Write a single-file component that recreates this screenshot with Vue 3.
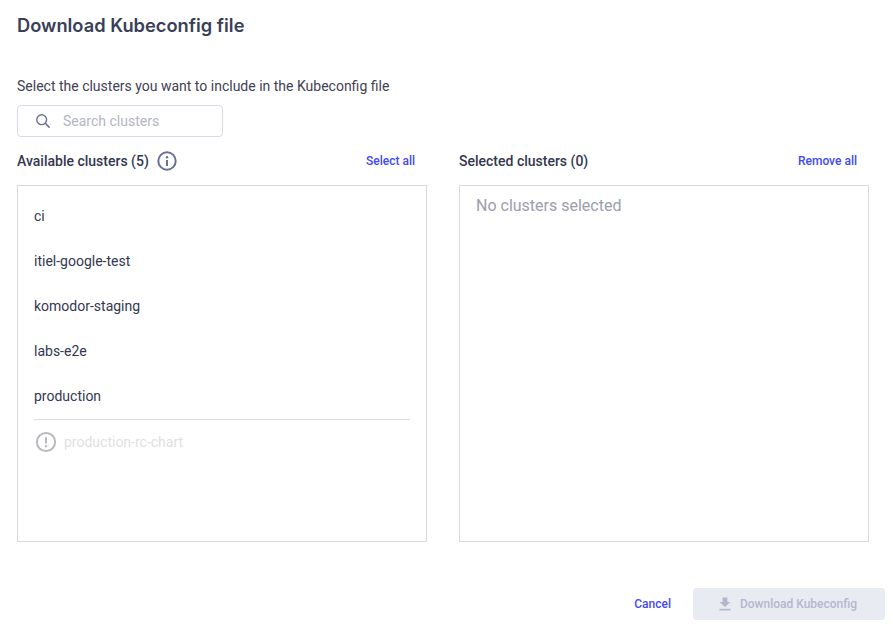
<script setup>
const clusters = ['ci', 'itiel-google-test', 'komodor-staging', 'labs-e2e', 'production']
</script>

<template>
  <div class="modal">
    <h1 class="title">Download Kubeconfig file</h1>
    <p class="intro">Select the clusters you want to include in the Kubeconfig file</p>
    <div class="search">
      <svg class="search-icon" width="16" height="16" viewBox="0 0 16 16" fill="none">
        <circle cx="6.7" cy="6.7" r="4.9" stroke="#6b7096" stroke-width="1.4" />
        <path d="M10.3 10.3 14.6 14.6" stroke="#6b7096" stroke-width="1.5" />
      </svg>
      <span class="placeholder">Search clusters</span>
    </div>
    <div class="columns">
      <section class="column">
        <header class="col-head">
          <div class="col-title">
            <span>Available clusters (5)</span>
            <svg width="20" height="20" viewBox="0 0 20 20" fill="none">
              <circle cx="10" cy="10" r="8.7" stroke="#6b7096" stroke-width="2" />
              <circle cx="10" cy="6.2" r="1.2" fill="#6b7096" />
              <path d="M10 9v6" stroke="#6b7096" stroke-width="2" />
            </svg>
          </div>
          <a class="link">Select all</a>
        </header>
        <div class="box list">
          <div v-for="c in clusters" :key="c" class="row">{{ c }}</div>
          <div class="divider"></div>
          <div class="disabled-row">
            <svg width="22" height="22" viewBox="0 0 22 22" fill="none">
              <circle cx="11" cy="11" r="9.1" stroke="#b9b9bd" stroke-width="2" />
              <path d="M11 6.200v6.200" stroke="#b9b9bd" stroke-width="2" />
              <circle cx="11" cy="15.3" r="1.2" fill="#b9b9bd" />
            </svg>
            <span>production-rc-chart</span>
          </div>
        </div>
      </section>
      <section class="column">
        <header class="col-head">
          <div class="col-title"><span>Selected clusters (0)</span></div>
          <a class="link">Remove all</a>
        </header>
        <div class="box empty">No clusters selected</div>
      </section>
    </div>
    <footer class="footer">
      <a class="link cancel">Cancel</a>
      <button class="download" disabled>
        <svg width="12" height="14" viewBox="0 0 12 14">
          <path d="M3.6 0.5h4.8v4.4h3L6 10 .6 4.900h3z" fill="#b4b7cd" />
          <rect x="0.500" y="11.800" width="11" height="1.700" fill="#b4b7cd" />
        </svg>
        <span>Download Kubeconfig</span>
      </button>
    </footer>
  </div>
</template>

<style scoped>
.modal {
  width: 893px;
  height: 627px;
  box-sizing: border-box;
  padding: 13px 8px 0 17px;
  background: #fff;
  font-family: Roboto, "Liberation Sans", sans-serif;
  color: #3b3d4f;
  overflow: hidden;
}
.title {
  margin: 0;
  font-family: Inter, Roboto, sans-serif;
  font-size: 18.3px;
  line-height: 24px;
  font-weight: 600;
  color: #3a3e58;
}
.intro {
  margin: 38px 0 0;
  font-size: 14px;
  line-height: 22px;
  color: #3f4154;
}
.search {
  display: flex;
  align-items: center;
  margin-top: 8px;
  width: 204px;
  height: 30px;
  border: 1px solid #d8dae6;
  border-radius: 4px;
}
.search-icon { margin-left: 17px; }
.placeholder {
  margin-left: 12px;
  font-size: 14px;
  color: #b4b6c6;
}
.columns {
  display: flex;
  gap: 32px;
  margin-top: 14px;
  width: 852px;
}
.column { width: 410px; }
.col-head {
  display: flex;
  align-items: center;
  justify-content: space-between;
  height: 20px;
  padding-right: 12px;
}
.col-title {
  display: flex;
  align-items: center;
  gap: 8px;
  font-size: 14px;
  font-weight: 500;
  color: #33374f;
}
.link {
  font-size: 12px;
  font-weight: 500;
  color: #3f49f5;
  cursor: pointer;
}
.box {
  box-sizing: border-box;
  height: 357px;
  margin-top: 14px;
  border: 1px solid #d9d9e0;
}
.list { padding: 7px 16px 0; }
.row {
  height: 45px;
  display: flex;
  align-items: center;
  font-size: 14px;
  color: #33374f;
}
.divider {
  height: 1px;
  margin-top: 1px;
  background: #dcdcdf;
}
.disabled-row {
  display: flex;
  align-items: center;
  gap: 7px;
  height: 44px;
  margin-left: 1px;
  font-size: 14px;
  color: #dfdfe2;
}
.empty {
  padding: 10px 16px;
  font-size: 16px;
  line-height: 20px;
  color: #9c9eab;
}
.footer {
  display: flex;
  align-items: center;
  justify-content: flex-end;
  gap: 22px;
  margin-top: 46px;
}
.cancel { font-weight: 500; }
.download {
  display: flex;
  align-items: center;
  justify-content: center;
  gap: 9px;
  width: 192px;
  height: 32px;
  padding: 0 7px 0 5px;
  border: 0;
  border-radius: 4px;
  background: #e9ebf3;
  font-family: inherit;
  font-size: 12px;
  font-weight: 500;
  color: #b4b7cd;
}
</style>
